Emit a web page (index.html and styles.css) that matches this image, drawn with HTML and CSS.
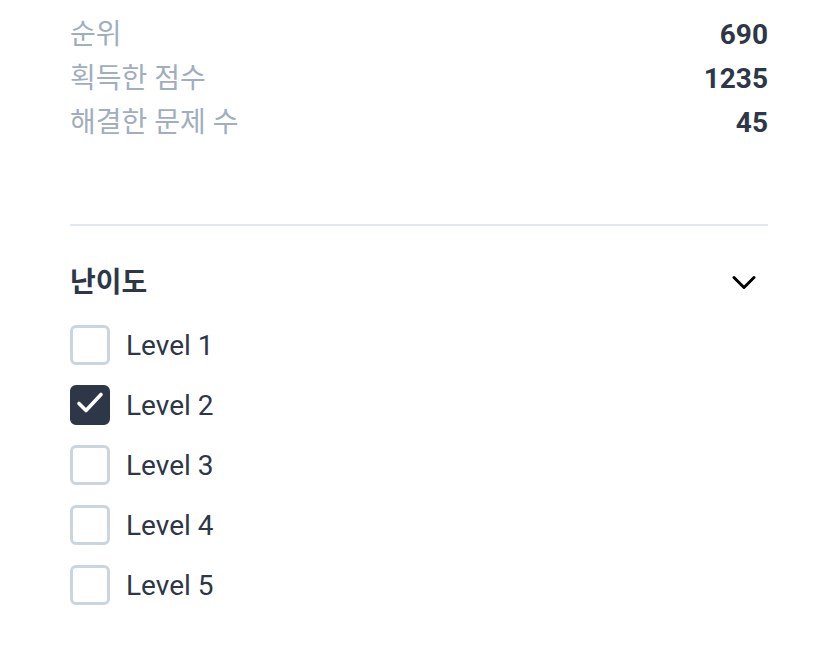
FILE: index.html
```html
<!DOCTYPE html>
<html>
<head>
<meta charset="utf-8"/>
<title>난이도</title>
<link rel="stylesheet" href="styles.css">
</head>
<body>
<div class="panel">
  <dl class="stats">
    <div class="stat"><dt>순위</dt><dd>690</dd></div>
    <div class="stat"><dt>획득한 점수</dt><dd>1235</dd></div>
    <div class="stat"><dt>해결한 문제 수</dt><dd>45</dd></div>
  </dl>

  <div class="filter">
    <div class="filter-head">
      <h3>난이도</h3>
      <svg class="chevron" width="24" height="24" viewBox="0 0 24 24">
        <path d="M2 6.5 L12 16.5 L22 6.5" fill="none" stroke="#000" stroke-width="3" stroke-linecap="round" stroke-linejoin="round"/>
      </svg>
    </div>
    <ul class="levels">
      <li><span class="box"></span>Level 1</li>
      <li><span class="box checked">
        <svg width="34" height="34" viewBox="0 0 34 34"><path d="M6 15.5 L13 22.5 L28 6.5" fill="none" stroke="#fff" stroke-width="3.6" stroke-linecap="round" stroke-linejoin="round"/></svg>
      </span>Level 2</li>
      <li><span class="box"></span>Level 3</li>
      <li><span class="box"></span>Level 4</li>
      <li><span class="box"></span>Level 5</li>
    </ul>
  </div>
</div>
</body>
</html>
```
FILE: styles.css
```css
body {
  margin: 0;
  background: white;
  font-family: Roboto, "Noto Sans CJK KR", sans-serif;
  color: #2d3748;
}

.panel {
  width: 698px;
  padding: 13px 0 0 70px;
}

.stats {
  margin: 0;
  padding-bottom: 79px;
  border-bottom: 2px solid #e2e8f0;
}

.stat {
  display: flex;
  justify-content: space-between;
  font-size: 28px;
  line-height: 44px;
}

.stat dt {
  color: #a0aec0;
}

.stat dd {
  margin: 0;
  font-weight: 700;
}

.filter-head {
  display: flex;
  justify-content: space-between;
  align-items: center;
  margin-top: 35px;
  padding-right: 12px;
}

.filter-head h3 {
  margin: 0;
  font-size: 28px;
  line-height: 44px;
  font-weight: 700;
}

.levels {
  list-style: none;
  margin: 10px 0 0;
  padding: 0;
}

.levels li {
  display: flex;
  align-items: center;
  gap: 16px;
  height: 60px;
  font-size: 28px;
}

.box {
  box-sizing: border-box;
  width: 40px;
  height: 40px;
  border: 3px solid #cbd5e0;
  border-radius: 6px;
  display: flex;
  align-items: center;
  justify-content: center;
}

.box.checked {
  background: #2d3748;
  border-color: #2d3748;
}
```
